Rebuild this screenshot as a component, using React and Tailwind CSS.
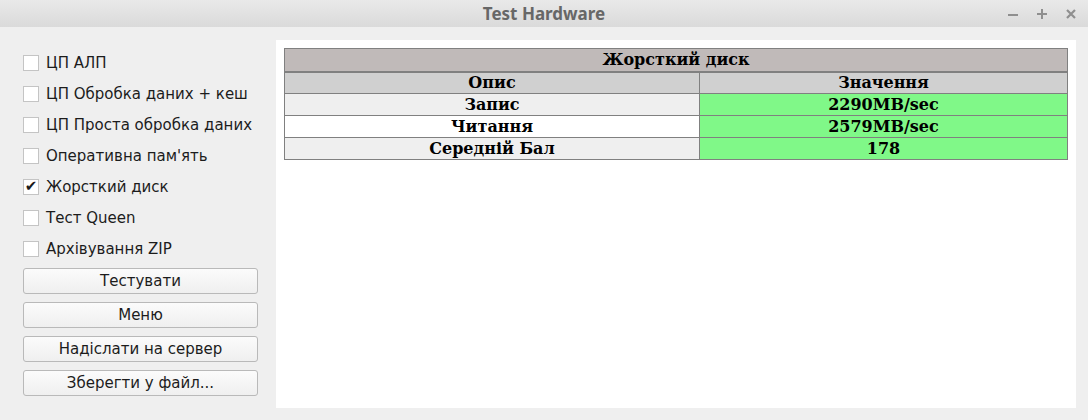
import { useState } from "react";

const tests = [
  "ЦП АЛП",
  "ЦП Обробка даних + кеш",
  "ЦП Проста обробка даних",
  "Оперативна пам'ять",
  "Жорсткий диск",
  "Тест Queen",
  "Архівування ZIP",
];

const actions = ["Тестувати", "Меню", "Надіслати на сервер", "Зберегти у файл..."];

const rows = [
  { name: "Запис", value: "2290MB/sec", bg: "bg-[#efefef]" },
  { name: "Читання", value: "2579MB/sec", bg: "bg-white" },
  { name: "Середній Бал", value: "178", bg: "bg-[#efefef]" },
];

function Check({ label, checked, onToggle }) {
  return (
    <label className="flex items-center h-[31px] cursor-default select-none" onClick={onToggle}>
      <span className="w-[16px] h-[16px] border border-[#c4c4c4] bg-white flex items-center justify-center text-[15px] leading-none text-[#1a1a1a]">
        {checked ? "✔" : ""}
      </span>
      <span className="ml-[7px] text-[15px] text-[#1c1c1c] pt-[1px]">{label}</span>
    </label>
  );
}

export default function App() {
  const [checked, setChecked] = useState({ "Жорсткий диск": true });

  return (
    <div
      className="w-[1088px] h-[420px] flex flex-col bg-[#efefef] overflow-hidden"
      style={{ fontFamily: '"DejaVu Sans", sans-serif' }}
    >
      {/* title bar */}
      <div className="h-[27px] flex items-center relative bg-gradient-to-b from-[#e9e9e9] to-[#dadada]">
        <div
          className="flex-1 text-center text-[17px] font-bold text-[#676767]"
          style={{ fontFamily: '"Noto Sans", sans-serif' }}
        >
          Test Hardware
        </div>
        <div className="absolute right-[12px] top-0 h-[27px] flex items-center gap-[19px]">
          <svg width="10" height="10" viewBox="0 0 10 10">
            <path d="M0 6h10" stroke="#8f8f8f" strokeWidth="2" />
          </svg>
          <svg width="10" height="10" viewBox="0 0 10 10">
            <path d="M0 5h10M5 0v10" stroke="#8f8f8f" strokeWidth="2" />
          </svg>
          <svg width="10" height="10" viewBox="0 0 10 10">
            <path d="M1 1l8 8M9 1l-8 8" stroke="#8f8f8f" strokeWidth="2.2" />
          </svg>
        </div>
      </div>

      <div className="flex-1 flex pl-[23px] pr-[12px] pb-[12px]">
        <div className="w-[235px] pt-[20px] flex flex-col">
          {tests.map((t) => (
            <Check
              key={t}
              label={t}
              checked={!!checked[t]}
              onToggle={() => setChecked((c) => ({ ...c, [t]: !c[t] }))}
            />
          ))}
          <div className="mt-[4px] flex flex-col gap-[8px]">
            {actions.map((a) => (
              <button
                key={a}
                className="h-[26px] rounded-[3px] border border-[#b9b9b9] bg-gradient-to-b from-[#fbfbfb] to-[#efefef] text-[15px] text-[#1c1c1c]"
              >
                {a}
              </button>
            ))}
          </div>
        </div>

        <div className="flex-1 ml-[18px] mt-[13px] bg-white p-[8px]">
          <table
            className="w-[784px] border-collapse text-[16px] font-bold text-black"
            style={{ fontFamily: '"DejaVu Serif", serif' }}
          >
            <thead>
              <tr className="h-[23px] bg-[#c0bab9]">
                <th colSpan={2} className="border border-[#808080] border-b-2 p-0 leading-none">
                  Жорсткий диск
                </th>
              </tr>
              <tr className="h-[22px] bg-[#d0d0d0]">
                <th className="w-[415px] border border-[#808080] p-0 leading-none">Опис</th>
                <th className="border border-[#808080] p-0 leading-none">Значення</th>
              </tr>
            </thead>
            <tbody>
              {rows.map((r) => (
                <tr key={r.name} className={`h-[22px] ${r.bg}`}>
                  <td className="border border-[#808080] p-0 text-center leading-none">{r.name}</td>
                  <td className="border border-[#808080] p-0 text-center leading-none bg-[#80f888]">
                    {r.value}
                  </td>
                </tr>
              ))}
            </tbody>
          </table>
        </div>
      </div>
    </div>
  );
}
